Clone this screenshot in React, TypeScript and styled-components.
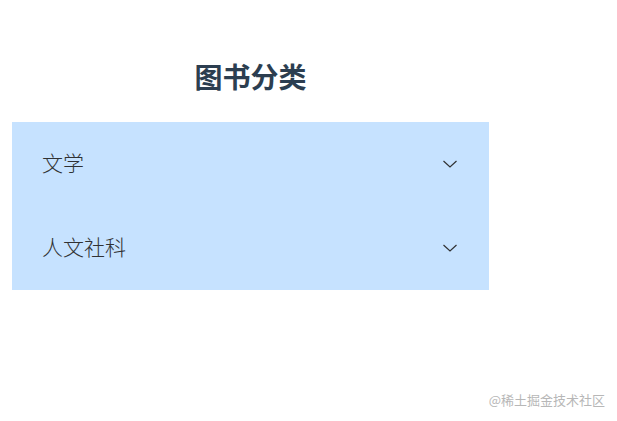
import React from 'react'
import styled, { createGlobalStyle } from 'styled-components'

const GlobalStyle = createGlobalStyle`
  html, body {
    margin: 0;
    padding: 0;
    background: #fff;
  }
  body {
    font-family: "Noto Sans CJK SC", "Noto Sans", sans-serif;
  }
`

const Page = styled.div`
  width: 617px;
  height: 421px;
  position: relative;
  box-sizing: border-box;
  padding: 0 0 0 12px;
`

const Column = styled.div`
  width: 477px;
  display: flex;
  flex-direction: column;
`

const Title = styled.h2`
  margin: 0;
  height: 122px;
  box-sizing: border-box;
  padding-top: 57px;
  text-align: center;
  font-size: 28px;
  line-height: 38px;
  font-weight: 700;
  color: #2c3e50;
`

const Menu = styled.ul`
  list-style: none;
  margin: 0;
  padding: 0;
  background: #c6e2ff;
`

const Item = styled.li`
  height: 84px;
  display: flex;
  align-items: center;
  justify-content: space-between;
  padding: 0 31px 0 30px;
  font-size: 21px;
  font-weight: 300;
  color: #303133;
`

const Label = styled.span`
  line-height: 1;
  margin-top: -4px;
`

const Watermark = styled.div`
  position: absolute;
  right: 12px;
  bottom: 12px;
  font-size: 13px;
  color: #b7b7b7;
`

function ArrowDown() {
  return (
    <svg width="16" height="10" viewBox="0 0 16 10" fill="none">
      <path d="M1.5 2 L8 8 L14.5 2" stroke="#303133" strokeWidth="1.2" />
    </svg>
  )
}

const categories = ['文学', '人文社科']

export default function App() {
  return (
    <>
      <GlobalStyle />
      <Page>
        <Column>
          <Title>图书分类</Title>
          <Menu>
            {categories.map((name) => (
              <Item key={name}>
                <Label>{name}</Label>
                <ArrowDown />
              </Item>
            ))}
          </Menu>
        </Column>
        <Watermark>@稀土掘金技术社区</Watermark>
      </Page>
    </>
  )
}
